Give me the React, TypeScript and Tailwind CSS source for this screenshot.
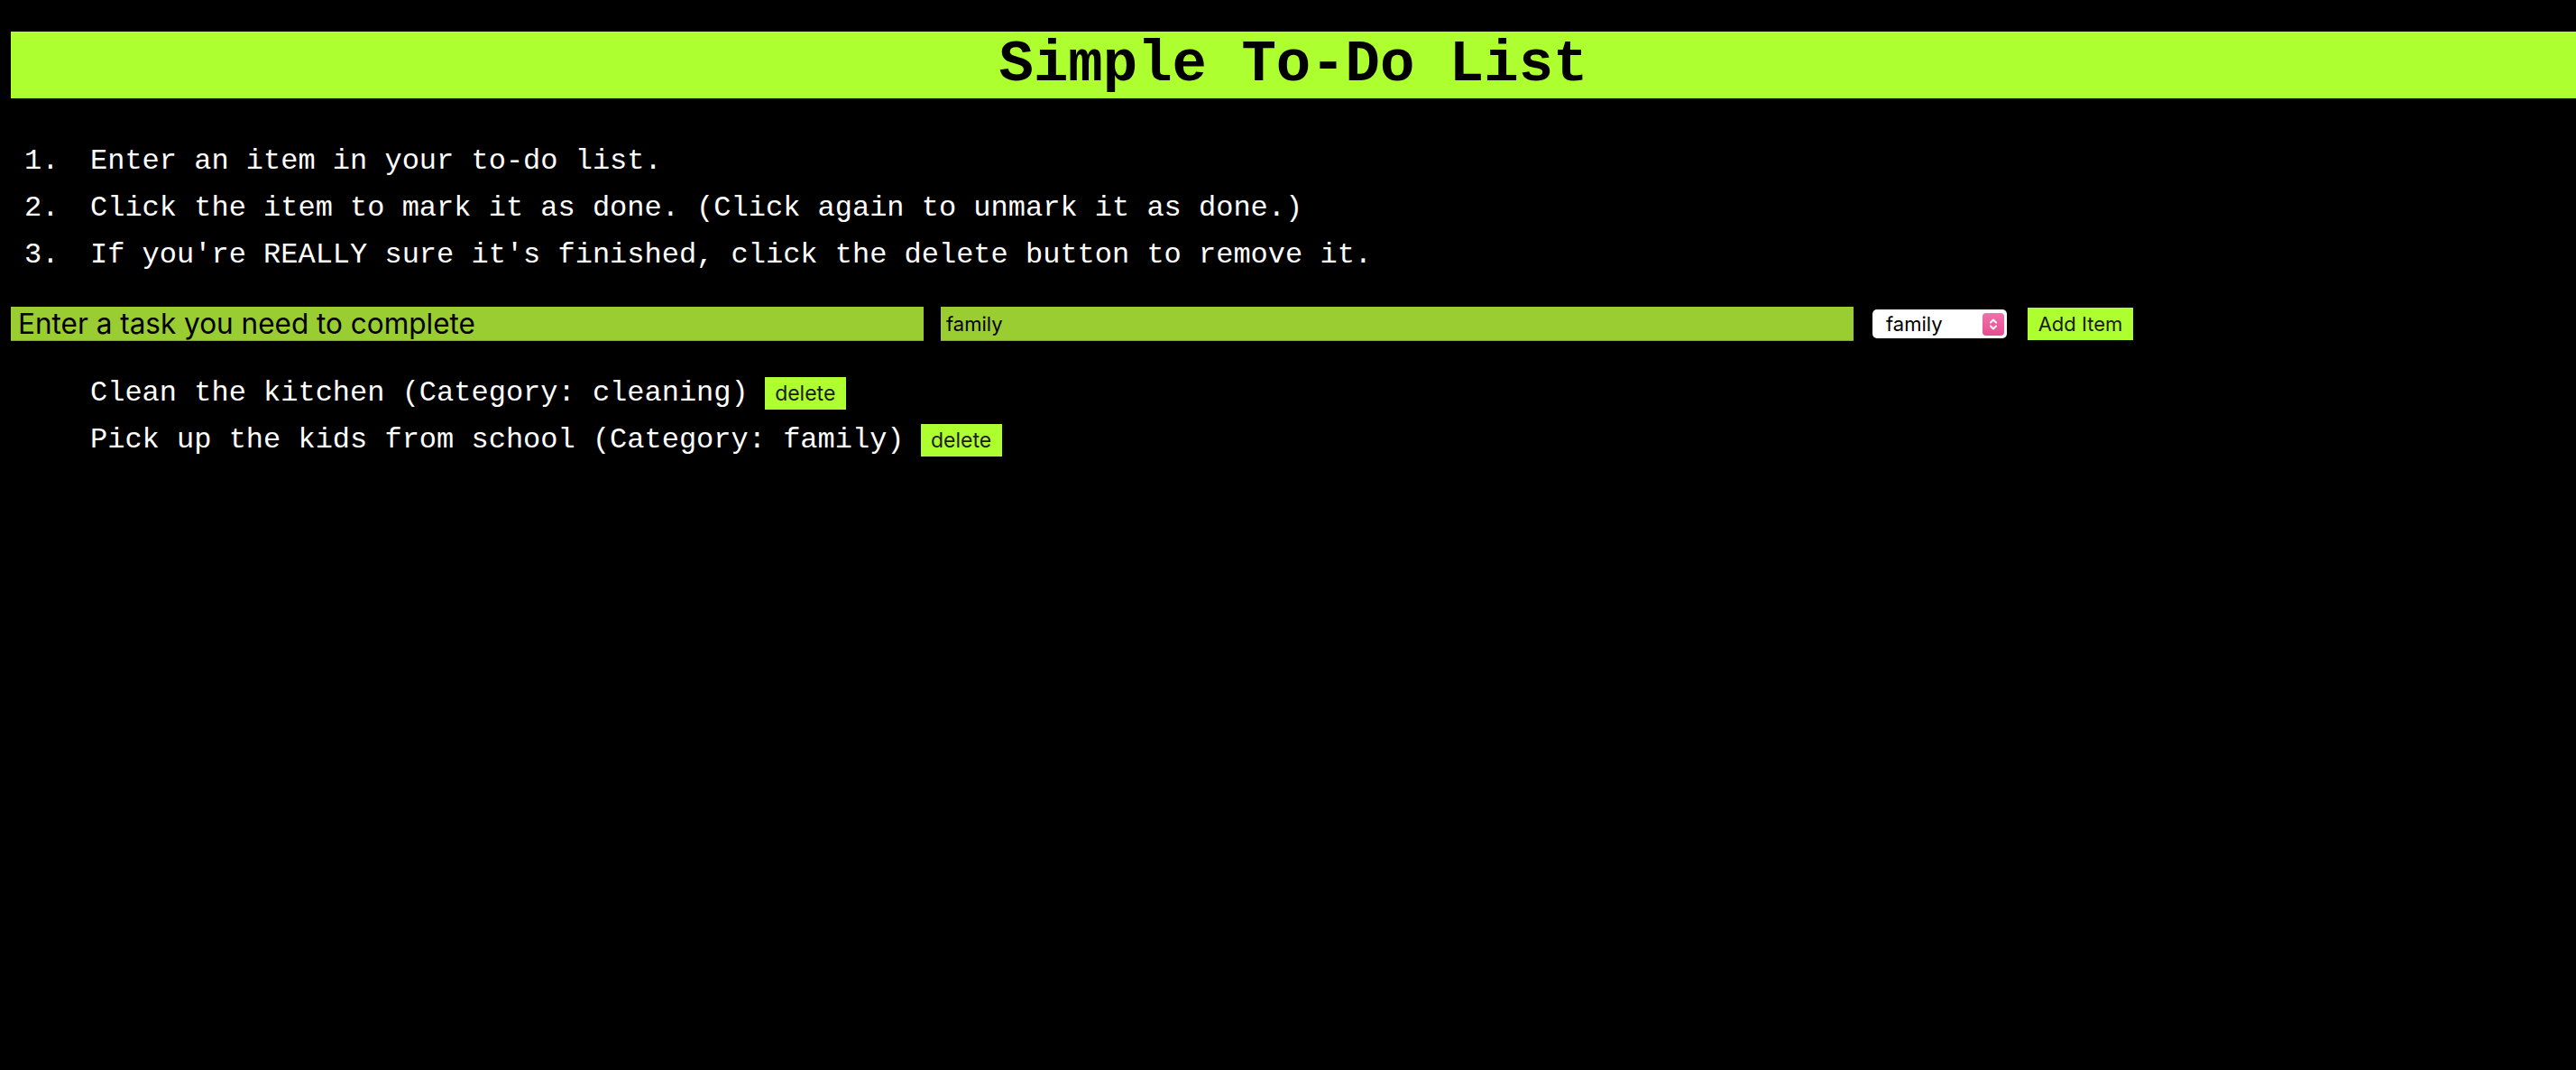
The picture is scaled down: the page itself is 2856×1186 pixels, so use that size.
import React from "react";

const mono = { fontFamily: '"Liberation Mono", "Courier New", monospace' };
const sans = { fontFamily: 'Inter, "Noto Sans", Arial, sans-serif' };

const steps = [
  "Enter an item in your to-do list.",
  "Click the item to mark it as done. (Click again to unmark it as done.)",
  "If you're REALLY sure it's finished, click the delete button to remove it.",
];

const items = [
  { text: "Clean the kitchen", category: "cleaning" },
  { text: "Pick up the kids from school", category: "family" },
];

export default function App() {
  return (
    <div className="min-h-[1186px] w-full bg-black pt-[35px]">
      <header className="ml-[12px] flex h-[74px] items-center justify-center bg-[#adff2f]">
        <h1 style={mono} className="text-[64px] font-bold leading-none text-black">
          Simple To-Do List
        </h1>
      </header>

      <ol style={mono} className="mt-[44px] text-[32px] leading-[52px] text-white">
        {steps.map((s, i) => (
          <li key={i} className="flex">
            <span className="w-[100px] shrink-0 pl-[27px]">{i + 1}.</span>
            <span className="whitespace-pre">{s}</span>
          </li>
        ))}
      </ol>

      <div className="mt-[31px] flex items-center pl-[12px]">
        <input
          style={sans}
          placeholder="Enter a task you need to complete"
          className="h-[38px] w-[1012px] border-b border-[#7fa82a] bg-[#9acd32] pl-[8px] text-[31.5px] text-black outline-none placeholder:text-black"
        />
        <input
          style={sans}
          defaultValue="family"
          className="ml-[19px] h-[38px] w-[1012px] border-b border-[#7fa82a] bg-[#9acd32] pl-[6px] text-[22px] text-black outline-none"
        />
        <div
          style={sans}
          className="ml-[21px] flex h-[32px] w-[149px] items-center justify-between rounded-[5px] bg-white pl-[15px] pr-[3px] text-[22px] text-black"
        >
          <span>family</span>
          <span className="flex h-[25px] w-[24px] items-center justify-center rounded-[4px] bg-gradient-to-b from-[#f171ad] to-[#e64c92]">
            <svg width="12" height="17" viewBox="0 0 12 17" fill="none" stroke="white" strokeWidth="2" strokeLinecap="round" strokeLinejoin="round">
              <path d="M3 6.5 L6 3.5 L9 6.5" />
              <path d="M3 10.5 L6 13.5 L9 10.5" />
            </svg>
          </span>
        </div>
        <button
          style={sans}
          className="ml-[23px] flex h-[36px] w-[117px] items-center justify-center bg-[#adff2f] text-[22px] text-[#1c1c1c]"
        >
          Add Item
        </button>
      </div>

      <ul style={mono} className="mt-[32px] text-[32px] text-white">
        {items.map((it, i) => (
          <li key={i} className="flex h-[52px] items-center pl-[100px]">
            <span className="whitespace-pre leading-[36px]">
              {it.text} (Category: {it.category})
            </span>
            <button
              style={sans}
              className="ml-[18px] flex h-[36px] w-[90px] items-center justify-center bg-[#adff2f] text-[23px] text-[#1c1c1c]"
            >
              delete
            </button>
          </li>
        ))}
      </ul>
    </div>
  );
}
